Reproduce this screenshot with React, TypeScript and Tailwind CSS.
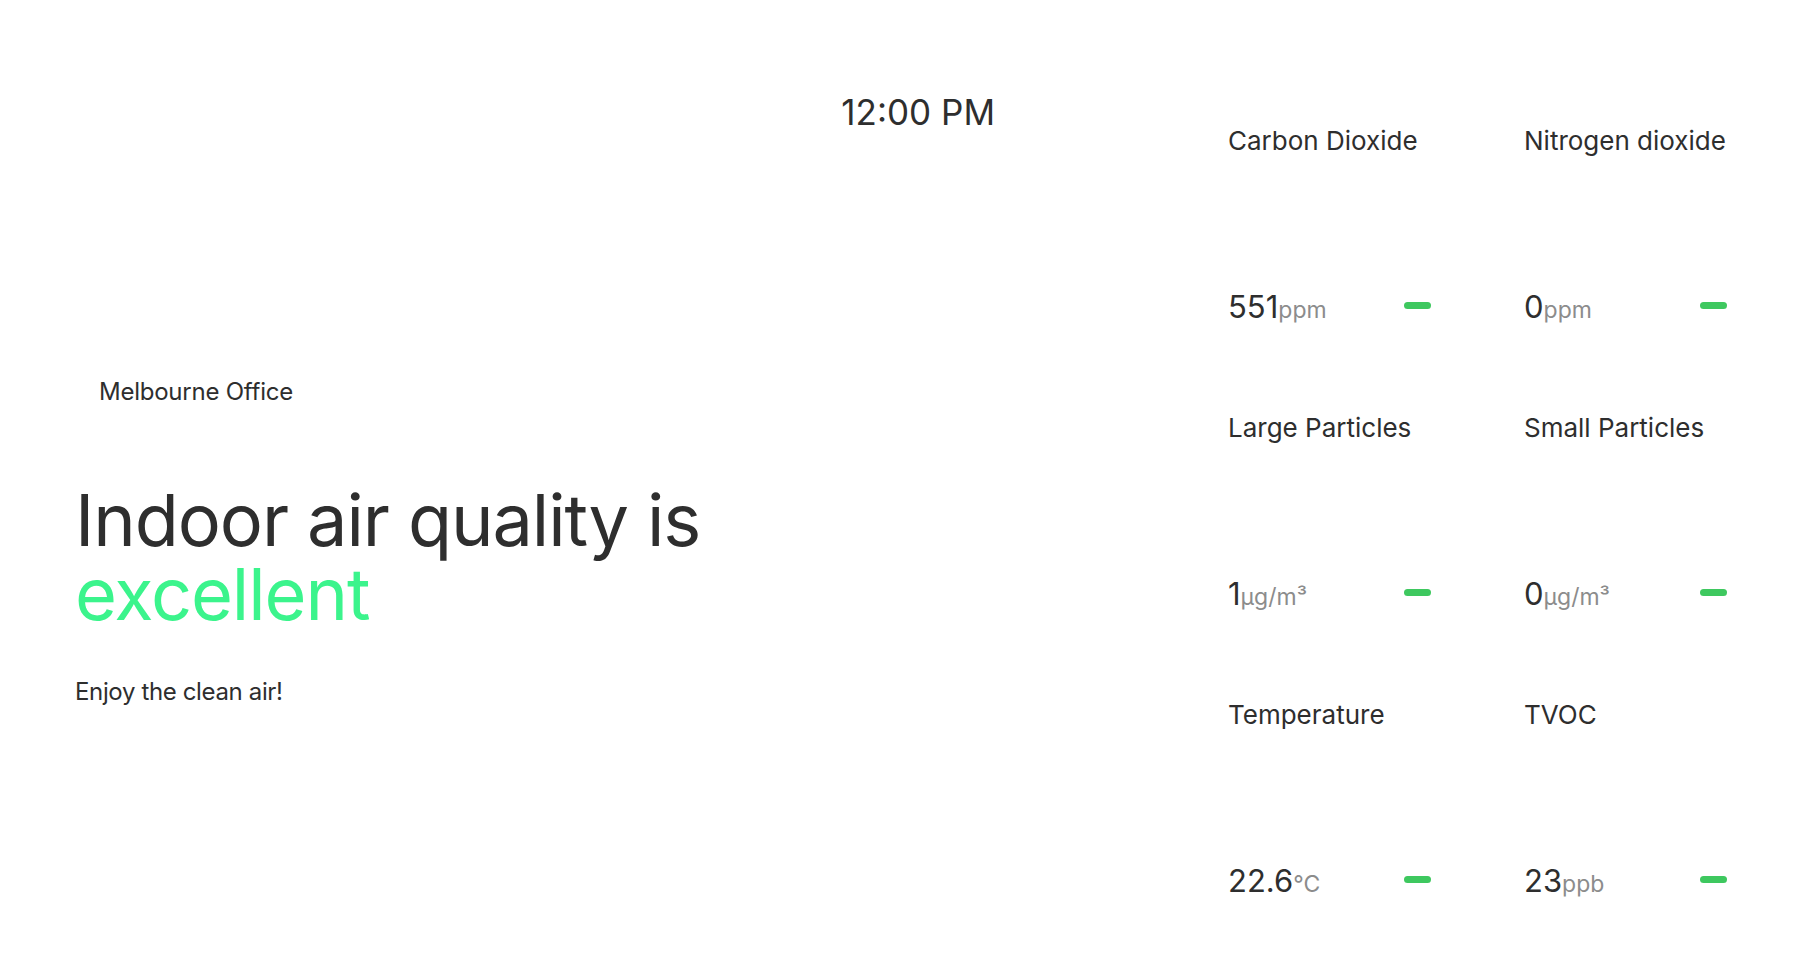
import React from 'react';

type Reading = {
  label: string;
  value: string;
  unit: string;
};

const readings: Reading[] = [
  { label: 'Carbon Dioxide', value: '551', unit: 'ppm' },
  { label: 'Nitrogen dioxide', value: '0', unit: 'ppm' },
  { label: 'Large Particles', value: '1', unit: 'µg/m³' },
  { label: 'Small Particles', value: '0', unit: 'µg/m³' },
  { label: 'Temperature', value: '22.6', unit: '°C' },
  { label: 'TVOC', value: '23', unit: 'ppb' },
];

function ReadingCell({ reading }: { reading: Reading }) {
  return (
    <div className="flex flex-col">
      <div className="text-[26px] leading-none text-[#2e2e2e]">{reading.label}</div>
      <div className="mt-[137px] flex items-start justify-between">
        <div className="text-[31px] leading-none text-[#2e2e2e]">
          {reading.value}
          <span className="text-[23px] leading-none text-[#8c8c8c]">{reading.unit}</span>
        </div>
        {/* status pill */}
        <div className="mt-[11px] h-[7px] w-[27px] rounded-full bg-[#3ec85f]" />
      </div>
    </div>
  );
}

export default function App() {
  return (
    <div className="flex h-[967px] w-full overflow-hidden bg-white font-[Inter,sans-serif] text-[#2e2e2e]">
      <section className="flex flex-1 flex-col pl-[75px] pr-[233px]">
        <div className="mt-[95px] self-end text-[35px] leading-none">12:00 PM</div>
        <div className="ml-[24px] mt-[250px] text-[24px] leading-none tracking-[-0.01em]">Melbourne Office</div>
        <h1 className="mt-[79px] text-[72px] font-normal leading-[74px] tracking-[-0.015em]">
          Indoor air quality is
          <br />
          <span className="text-[#3bf48c]">excellent</span>
        </h1>
        <p className="mt-[49px] text-[24px] leading-none tracking-[-0.015em]">Enjoy the clean air!</p>
      </section>

      <section className="w-[573px] shrink-0 pr-[74px] pt-[128px]">
        <div className="grid grid-cols-[203px_203px] auto-rows-[287px] gap-x-[93px]">
          {readings.map((r) => (
            <ReadingCell key={r.label} reading={r} />
          ))}
        </div>
      </section>
    </div>
  );
}
